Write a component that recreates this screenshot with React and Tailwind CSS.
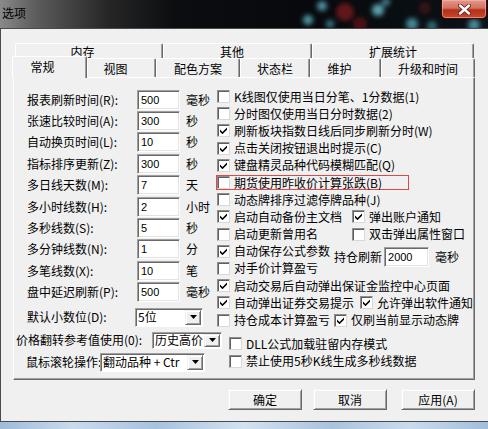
// 选项 dialog — 常规 tab

const LEFT_ROWS = [
  ["报表刷新时间(R):", "500", "毫秒"],
  ["张速比较时间(A):", "300", "秒"],
  ["自动换页时间(L):", "10", "秒"],
  ["指标排序更新(Z):", "300", "秒"],
  ["多日线天数(M):", "7", "天"],
  ["多小时线数(H):", "2", "小时"],
  ["多秒线数(S):", "5", "秒"],
  ["多分钟线数(N):", "1", "分"],
  ["多笔线数(X):", "10", "笔"],
  ["盘中延迟刷新(P):", "500", "毫秒"],
];

const BACK_TABS = [
  { label: "内存", cls: "w-[148px] pr-[13px]" },
  { label: "其他", cls: "w-[149px] pr-[11px]" },
  { label: "扩展统计", cls: "w-[162px]" },
];

const FRONT_TABS = [
  { label: "视图", cls: "w-[69px] pr-[12px]" },
  { label: "配色方案", cls: "w-[84px]" },
  { label: "状态栏", cls: "w-[70px]" },
  { label: "维护", cls: "w-[71px] pr-[12px]" },
  { label: "升级和时间", cls: "w-[94px]" },
];

function Box({ on }) {
  return (
    <span className="flex w-[13px] h-[13px] shrink-0 items-center justify-center bg-white border border-t-[#8e8e8e] border-l-[#8e8e8e] border-r-[#d8d8d8] border-b-[#d8d8d8] shadow-[inset_1px_1px_0_#5f5f5f]">
      {on && (
        <svg width="7" height="7" viewBox="0 0 7 7">
          <path d="M0 2.4L2.5 4.9L7 0.4V2.7L2.5 7.2L0 4.7Z" fill="#000" />
        </svg>
      )}
    </span>
  );
}

function Check({ on, children }) {
  return (
    <span className="flex items-center gap-[4px] whitespace-nowrap">
      <Box on={on} />
      <span>{children}</span>
    </span>
  );
}

function Field({ value, className = "" }) {
  return (
    <span
      className={`flex items-center h-[20px] shrink-0 bg-white pl-[3px] pt-[1px] font-['Liberation_Sans',sans-serif] text-[11px] border border-t-[#a0a0a0] border-l-[#a0a0a0] border-r-white border-b-white shadow-[inset_1px_1px_0_#696969,inset_-1px_-1px_0_#e3e3e3] ${className}`}
    >
      {value}
    </span>
  );
}

function Combo({ value, className = "" }) {
  return (
    <span
      className={`relative flex shrink-0 items-stretch bg-white p-[1px] border border-t-[#a0a0a0] border-l-[#a0a0a0] border-r-white border-b-white shadow-[inset_1px_1px_0_#696969] ${className}`}
    >
      <span className="flex flex-1 items-center whitespace-nowrap pl-[1px]">{value}</span>
      <span className="flex w-[16px] shrink-0 items-center justify-center bg-[#f0f0f0] border border-t-[#f0f0f0] border-l-[#f0f0f0] border-r-[#696969] border-b-[#696969] shadow-[inset_1px_1px_0_#fff,inset_-1px_-1px_0_#a0a0a0]">
        <svg width="7" height="4" viewBox="0 0 7 4">
          <path d="M0 0H7L3.5 4Z" fill="#000" />
        </svg>
      </span>
    </span>
  );
}

function Button({ children, className = "" }) {
  return (
    <span
      className={`flex w-[74px] h-[21px] items-center justify-center bg-[#f0f0f0] border border-t-[#f4f4f4] border-l-[#f4f4f4] border-r-[#696969] border-b-[#696969] shadow-[inset_1px_1px_0_#fff,inset_-1px_-1px_0_#a0a0a0] ${className}`}
    >
      {children}
    </span>
  );
}

function TitleBar() {
  return (
    <div className="relative flex h-[28px] shrink-0 items-start overflow-hidden bg-[linear-gradient(90deg,#8a8a8a_0%,#5e5e5e_7%,#262626_22%,#0b0d10_36%,#07090c_62%,#0a1217_100%)]">
      <svg className="absolute inset-0" width="488" height="28" viewBox="0 0 488 28">
        <defs>
          <filter id="bk" x="-50%" y="-50%" width="200%" height="200%">
            <feGaussianBlur stdDeviation="2.6" />
          </filter>
        </defs>
        <g filter="url(#bk)">
          <circle cx="308" cy="20" r="5" fill="#5fb9cc" opacity="0.8" />
          <circle cx="322" cy="6" r="5" fill="#6ccbe0" opacity="0.7" />
          <circle cx="330" cy="24" r="4" fill="#4aa6ba" opacity="0.7" />
          <circle cx="345" cy="12" r="9" fill="#8a1c1c" opacity="0.7" />
          <circle cx="360" cy="24" r="7" fill="#7a1818" opacity="0.6" />
          <circle cx="378" cy="10" r="6" fill="#78d4e6" opacity="0.75" />
          <circle cx="386" cy="2" r="4" fill="#6ccbe0" opacity="0.6" />
          <circle cx="412" cy="24" r="6" fill="#5fbfd2" opacity="0.7" />
          <circle cx="432" cy="26" r="5" fill="#4aa6ba" opacity="0.6" />
          <circle cx="425" cy="8" r="6" fill="#6a1a1a" opacity="0.5" />
          <circle cx="474" cy="25" r="6" fill="#5fbfd2" opacity="0.7" />
        </g>
      </svg>
      <span className="relative mt-[7px] ml-[2px] text-[12px] text-black">选项</span>
      <span className="relative ml-auto mr-[1px] flex w-[46px] h-[19px] items-center justify-center rounded-b-[5px] border border-t-0 border-[#3b0e08] bg-[linear-gradient(180deg,#e29a8c_0%,#d2705f_45%,#b3301a_55%,#c9472c_100%)] shadow-[inset_0_0_0_1px_rgba(255,190,175,0.55)]">
        <svg width="13" height="11" viewBox="0 0 13 11">
          <path d="M2 1.5L11 9.5M11 1.5L2 9.5" stroke="#5a1a10" strokeWidth="4" strokeLinecap="round" />
          <path d="M2 1.5L11 9.5M11 1.5L2 9.5" stroke="#fff" strokeWidth="2.4" strokeLinecap="round" />
        </svg>
      </span>
    </div>
  );
}

export default function App() {
  return (
    <div className="flex w-[488px] h-[429px] flex-col overflow-hidden bg-[#f0f0f0] font-['Noto_Sans_CJK_SC',sans-serif] text-[12px] leading-none text-black select-none">
      <TitleBar />

      <div className="flex h-[394px] shrink-0 flex-col border border-r-0 border-[#4a4a4a] bg-[#f0f0f0] pt-[14px]">
        {/* back tab row */}
        <div className="ml-[14px] flex h-[15px]">
          {BACK_TABS.map((t) => (
            <span
              key={t.label}
              className={`flex h-[15px] justify-center pt-[2px] rounded-t-[2px] border-t border-l border-white border-r border-r-[#696969] shadow-[inset_-1px_0_0_#a0a0a0] ${t.cls}`}
            >
              {t.label}
            </span>
          ))}
        </div>

        {/* front tab row */}
        <div className="ml-[11px] flex h-[19px] items-start">
          <span className="relative z-10 -mt-[2px] flex h-[22px] w-[75px] justify-center bg-[#f0f0f0] pt-[4px] pr-[14px] rounded-t-[2px] border-t border-l border-white border-r border-r-[#696969] shadow-[inset_-1px_0_0_#a0a0a0]">
            常规
          </span>
          {FRONT_TABS.map((t) => (
            <span
              key={t.label}
              className={`flex h-[19px] justify-center pt-[4px] rounded-t-[2px] border-t border-l border-white border-r border-r-[#696969] shadow-[inset_-1px_0_0_#a0a0a0] ${t.cls}`}
            >
              {t.label}
            </span>
          ))}
        </div>

        {/* panel */}
        <div className="ml-[12px] flex w-[462px] h-[303px] flex-col border border-t-white border-l-white border-r-[#696969] border-b-[#696969] shadow-[inset_-1px_-1px_0_#a0a0a0]">
          <div className="flex pt-[10px]">
            <div className="flex w-[203px] flex-col pl-[13px] pt-[1px]">
              {LEFT_ROWS.map(([label, value, unit]) => (
                <div key={label} className="flex h-[21.4px] items-center whitespace-nowrap">
                  <span className="w-[110px]">{label}</span>
                  <Field value={value} className="w-[43px]" />
                  <span className="ml-[6px]">{unit}</span>
                </div>
              ))}
              <div className="mt-[5px] flex h-[19px] items-center whitespace-nowrap">
                <span className="w-[108px]">默认小数位(D):</span>
                <Combo value="5位" className="w-[68px] h-[19px]" />
              </div>
            </div>

            <div className="flex flex-col">
              <div className="flex h-[17.2px] items-center">
                <Check>K线图仅使用当日分笔、1分数据(1)</Check>
              </div>
              <div className="flex h-[17.2px] items-center">
                <Check>分时图仅使用当日分时数据(2)</Check>
              </div>
              <div className="flex h-[17.2px] items-center">
                <Check on>刷新板块指数日线后同步刷新分时(W)</Check>
              </div>
              <div className="flex h-[17.2px] items-center">
                <Check on>点击关闭按钮退出时提示(C)</Check>
              </div>
              <div className="flex h-[17.2px] items-center">
                <Check on>键盘精灵品种代码模糊匹配(Q)</Check>
              </div>
              <div className="flex h-[17.2px] items-center">
                <span className="-ml-[1px] flex h-[15px] w-[193px] items-center border border-[#e04848]">
                  <Check>期货使用昨收价计算张跌(B)</Check>
                </span>
              </div>
              <div className="flex h-[17.2px] items-center">
                <Check>动态牌排序过滤停牌品种(J)</Check>
              </div>
              <div className="flex h-[17.2px] items-center">
                <span className="w-[135px]">
                  <Check on>启动自动备份主文档</Check>
                </span>
                <Check on>弹出账户通知</Check>
              </div>
              <div className="flex h-[17.2px] items-center">
                <span className="w-[135px]">
                  <Check>启动更新曾用名</Check>
                </span>
                <Check>双击弹出属性窗口</Check>
              </div>
              <div className="flex">
                <div className="flex w-[117px] flex-col">
                  <div className="flex h-[17.2px] items-center">
                    <Check on>自动保存公式参数</Check>
                  </div>
                  <div className="flex h-[17.2px] items-center">
                    <Check>对手价计算盈亏</Check>
                  </div>
                </div>
                <div className="flex items-center pb-[5px] whitespace-nowrap">
                  <span>持仓刷新</span>
                  <Field value="2000" className="ml-[2px] w-[45px]" />
                  <span className="ml-[6px]">毫秒</span>
                </div>
              </div>
              <div className="flex h-[17.2px] items-center">
                <Check on>启动交易后自动弹出保证金监控中心页面</Check>
              </div>
              <div className="flex h-[17.2px] items-center">
                <span className="w-[143px]">
                  <Check on>自动弹出证券交易提示</Check>
                </span>
                <Check on>允许弹出软件通知</Check>
              </div>
              <div className="flex h-[17.2px] items-center">
                <span className="w-[117px]">
                  <Check>持仓成本计算盈亏</Check>
                </span>
                <Check on>仅刷当前显示动态牌</Check>
              </div>
            </div>
          </div>

          <div className="flex">
            <div className="flex w-[215px] flex-col">
              <div className="mt-[3px] flex h-[17px] items-center pl-[2px] whitespace-nowrap">
                <span className="w-[136px]">价格翻转参考值使用(0):</span>
                <Combo value="历史高价" className="w-[70px] h-[17px]" />
              </div>
              <div className="mt-[4px] flex h-[19px] items-center pl-[12px] whitespace-nowrap">
                <span className="w-[74px]">鼠标滚轮操作:</span>
                <Combo value="翻动品种 + Ctr" className="w-[105px] h-[19px]" />
              </div>
            </div>
            <div className="flex flex-col pt-[6.6px]">
              <div className="flex h-[17.2px] items-center">
                <Check>DLL公式加载驻留内存模式</Check>
              </div>
              <div className="flex h-[17.2px] items-center">
                <Check>禁止使用5秒K线生成多秒线数据</Check>
              </div>
            </div>
          </div>
        </div>

        {/* buttons */}
        <div className="mt-[9px] ml-[227px] flex">
          <Button className="border-[#5a5a5a]">确定</Button>
          <Button className="ml-[11px]">取消</Button>
          <Button className="ml-[14px]">应用(A)</Button>
        </div>
      </div>

      <div className="h-[7px] shrink-0 bg-[linear-gradient(90deg,#9fbbd9_0%,#c8dbef_15%,#a7c2df_32%,#d2e2f2_50%,#a9c3de_68%,#c9dcee_84%,#a2bddb_100%)]" />
    </div>
  );
}
